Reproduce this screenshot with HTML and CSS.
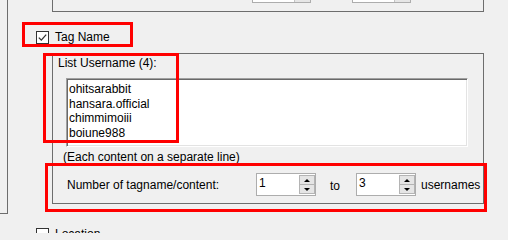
FILE: index.html
```html
<!DOCTYPE html>
<html lang="en">
<head>
<meta charset="utf-8">
<title>Tag Name settings</title>
<link rel="stylesheet" href="styles.css">
</head>
<body>
<div class="screen">
  <div class="edge"></div>
  <div class="main">
    <div class="top-group">
      <div class="stub"><span class="stub-spin"></span></div>
      <div class="stub"><span class="stub-spin"></span></div>
    </div>

    <label class="check-row tag-row">
      <span class="checkbox"><svg width="11" height="11" viewBox="0 0 11 11"><path d="M1.8 5.6 L4.3 8.1 L9.2 2.6" fill="none" stroke="#333" stroke-width="1.3"/></svg></span>
      <span class="check-text">Tag Name</span>
    </label>

    <div class="group">
      <div class="group-title">List Username (4):</div>
      <div class="textarea">
        <div>ohitsarabbit</div>
        <div>hansara.official</div>
        <div>chimmimoiii</div>
        <div>boiune988</div>
      </div>
      <div class="hint">(Each content on a separate line)</div>
      <div class="count-row">
        <span class="count-label">Number of tagname/content:</span>
        <div class="spin">
          <span class="spin-val">1</span>
          <span class="spin-btns">
            <span class="spin-btn"><i class="tri-up"></i></span>
            <span class="spin-btn lower"><i class="tri-down"></i></span>
          </span>
        </div>
        <span class="to">to</span>
        <div class="spin">
          <span class="spin-val">3</span>
          <span class="spin-btns">
            <span class="spin-btn"><i class="tri-up"></i></span>
            <span class="spin-btn lower"><i class="tri-down"></i></span>
          </span>
        </div>
        <span class="unit">usernames</span>
      </div>
    </div>

    <label class="check-row loc-row">
      <span class="checkbox"></span>
      <span class="check-text">Location</span>
    </label>
  </div>

  <div class="mark mark-1"></div>
  <div class="mark mark-2"></div>
  <div class="mark mark-3"></div>
</div>
</body>
</html>
```

FILE: styles.css
```css
* { box-sizing: border-box; }

html, body { margin: 0; padding: 0; }

body {
  width: 508px;
  height: 233px;
  overflow: hidden;
  background: #f0f0f0;
  font-family: "Liberation Sans", Arial, sans-serif;
  font-size: 12px;
  color: #000;
}

.screen {
  position: relative;
  display: flex;
  align-items: flex-start;
  height: 233px;
  overflow: hidden;
}

.edge {
  flex: none;
  width: 8px;
  height: 214px;
  border-right: 1px solid #6d6d6d;
  border-bottom: 1px solid #6d6d6d;
}

.main {
  flex: 1;
  display: flex;
  flex-direction: column;
  align-items: flex-start;
}

.top-group {
  margin-left: 44px;
  width: 432px;
  height: 12px;
  border: 1px solid #6d6d6d;
  border-top: none;
  display: flex;
  align-items: flex-start;
  padding-left: 199px;
  gap: 41px;
}

.stub {
  width: 59px;
  height: 3px;
  background: #fff;
  border: 1px solid #adadad;
  border-top: none;
  display: flex;
  justify-content: flex-end;
}

.stub-spin {
  width: 16px;
  height: 2px;
  background: #e6e6e6;
  border-left: 1px solid #c4c4c4;
}

.check-row {
  display: flex;
  align-items: flex-start;
  margin-left: 28px;
  line-height: 14px;
}

.tag-row { margin-top: 19px; }
.loc-row { margin-top: 24px; }

.checkbox {
  flex: none;
  width: 13px;
  height: 13px;
  border: 1px solid #333;
  background: #fff;
  margin-right: 6px;
  display: flex;
  align-items: center;
  justify-content: center;
}

.check-text { margin-top: -1px; }

.group {
  margin-top: 9px;
  margin-left: 44px;
  width: 432px;
  height: 151px;
  border: 1px solid #6d6d6d;
}

.group-title {
  padding: 2px 0 0 5px;
  line-height: 14px;
}

.textarea {
  margin: 8px 0 0 13px;
  width: 402px;
  height: 69px;
  background: #fff;
  border: 1px solid;
  border-color: #a0a0a0 #ffffff #ffffff #a0a0a0;
  box-shadow: inset 1px 1px 0 #696969, inset -1px -1px 0 #e3e3e3;
  padding: 3px 0 0 2px;
  line-height: 14.67px;
}

.hint {
  margin: 3px 0 0 10px;
  line-height: 14px;
}

.count-row {
  display: flex;
  align-items: center;
  height: 23px;
  margin: 9px 0 0 14px;
}

.count-label { width: 189px; }

.spin {
  width: 60px;
  height: 23px;
  display: flex;
  background: #fff;
  border: 1px solid #adadad;
}

.spin-val {
  flex: 1;
  padding: 2px 0 0 2px;
  line-height: 14px;
}

.spin-btns {
  width: 16px;
  margin: 1px 0;
  display: flex;
  flex-direction: column;
  border: 1px solid #b4b4b4;
}

.spin-btn {
  flex: 1;
  background: #e5e5e5;
  display: flex;
  align-items: center;
  justify-content: center;
}

.spin-btn.lower { border-top: 1px solid #b4b4b4; }

.tri-up, .tri-down {
  width: 0;
  height: 0;
  border-left: 3px solid transparent;
  border-right: 3px solid transparent;
}

.tri-up { border-bottom: 3px solid #000; }
.tri-down { border-top: 3px solid #000; }

.to {
  width: 40px;
  padding-left: 14px;
  margin-top: 3px;
}

.unit { margin-left: 5px; }

.mark {
  position: absolute;
  border: 3px solid #ff0000;
}

.mark-1 { left: 22px; top: 22px; width: 111px; height: 25px; }
.mark-2 { left: 43px; top: 53px; width: 136px; height: 90px; }
.mark-3 { left: 45px; top: 163px; width: 442px; height: 49px; }
```
